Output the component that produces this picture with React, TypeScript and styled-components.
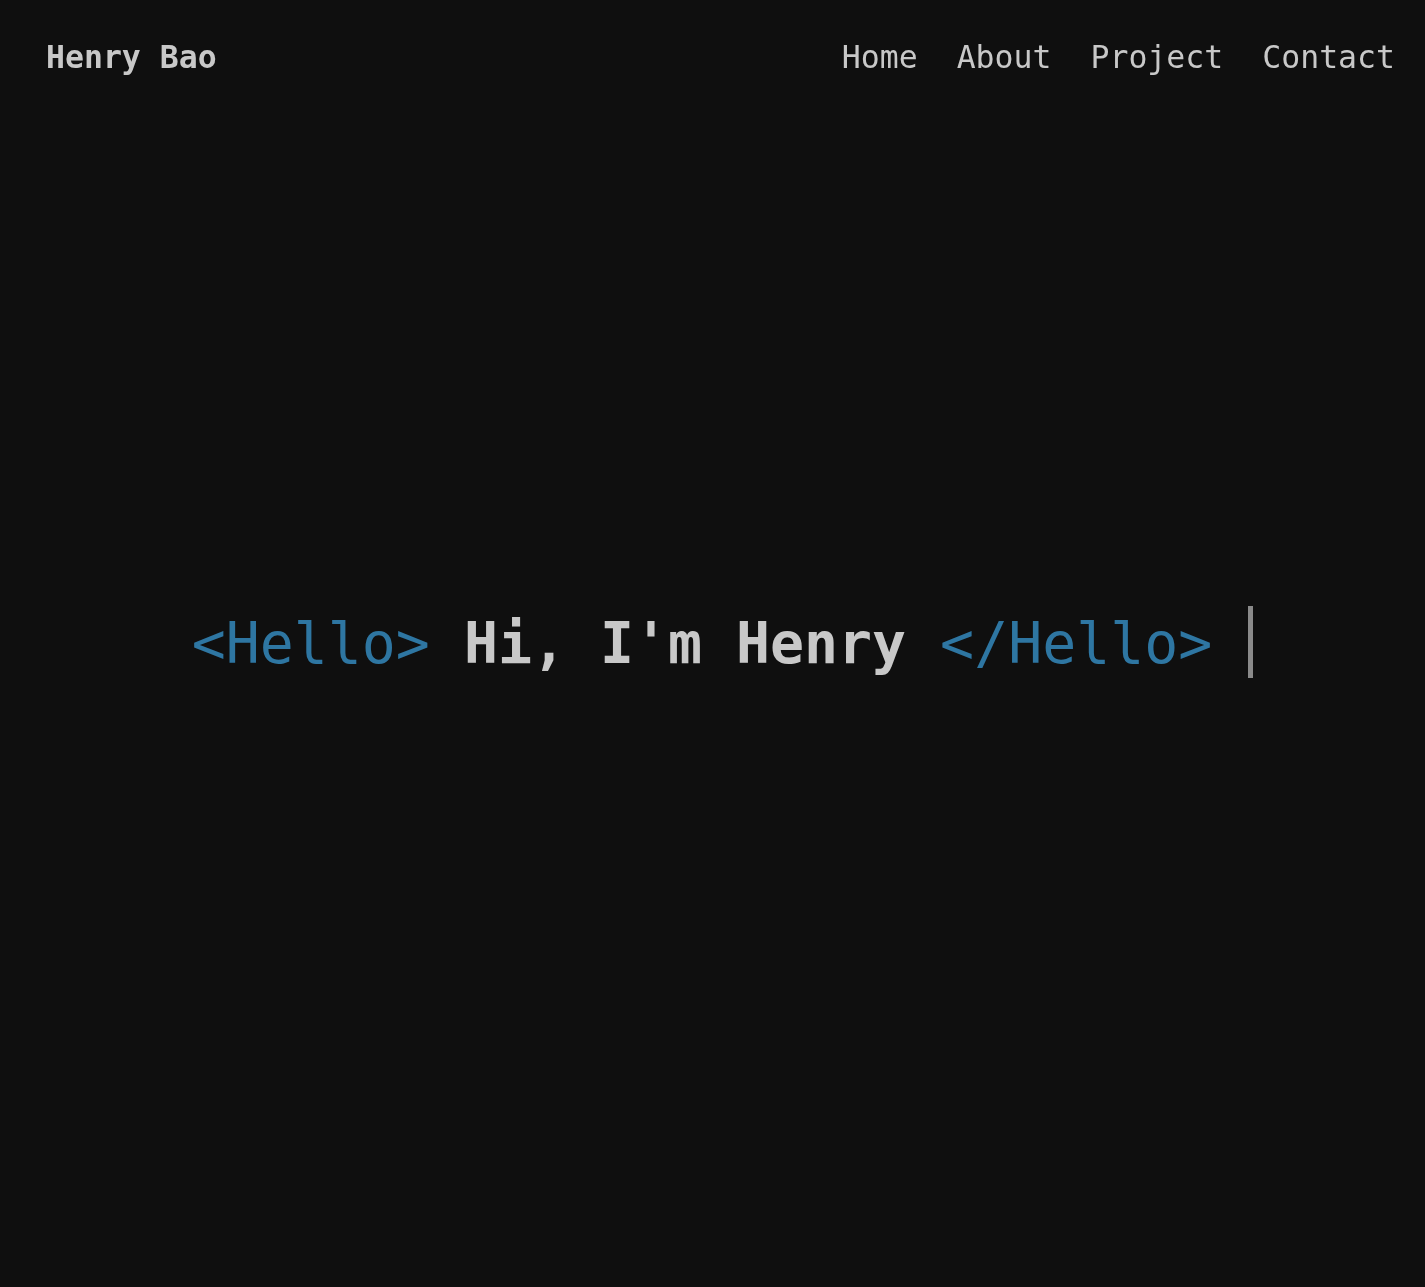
import React from "react";
import styled, { createGlobalStyle } from "styled-components";

const GlobalStyle = createGlobalStyle`
  html, body {
    margin: 0;
    padding: 0;
    background: #0f0f0f;
  }
  body {
    font-family: "DejaVu Sans Mono", "Liberation Mono", monospace;
    color: #c8c8c8;
  }
`;

const Page = styled.div`
  min-height: 100vh;
  background: #0f0f0f;
  display: flex;
  flex-direction: column;
`;

const Header = styled.header`
  position: fixed;
  top: 0;
  left: 0;
  right: 0;
  height: 114px;
  display: flex;
  align-items: center;
  justify-content: space-between;
  padding: 0 30px 0 46px;
  box-sizing: border-box;
`;

const Brand = styled.a`
  font-size: 31.5px;
  font-weight: 700;
  color: #c8c8c8;
  text-decoration: none;
`;

const Nav = styled.nav`
  display: flex;
  gap: 39px;
`;

const NavLink = styled.a`
  font-size: 31.5px;
  font-weight: 400;
  color: #c8c8c8;
  text-decoration: none;
`;

const Hero = styled.main`
  flex: 1;
  min-height: 100vh;
  display: flex;
  align-items: center;
  justify-content: center;
`;

const Line = styled.h1`
  margin: 0 0 0 20px;
  display: flex;
  align-items: center;
  font-size: 56.5px;
  font-weight: 700;
  white-space: pre;
`;

const Tag = styled.span`
  color: #2e76a2;
  font-weight: 400;
`;

const Name = styled.span`
  color: #c8c8c8;
`;

const Cursor = styled.span`
  display: inline-block;
  width: 5px;
  height: 72px;
  background: #8a8a8a;
  margin: 0 0 4px 36px;
`;

export default function App() {
  return (
    <Page>
      <GlobalStyle />
      <Header>
        <Brand href="#">Henry Bao</Brand>
        <Nav>
          <NavLink href="#">Home</NavLink>
          <NavLink href="#">About</NavLink>
          <NavLink href="#">Project</NavLink>
          <NavLink href="#">Contact</NavLink>
        </Nav>
      </Header>
      <Hero>
        <Line>
          <Tag>{"<Hello>"}</Tag>
          <Name>{" Hi, I'm Henry "}</Name>
          <Tag>{"</Hello>"}</Tag>
          <Cursor />
        </Line>
      </Hero>
    </Page>
  );
}
